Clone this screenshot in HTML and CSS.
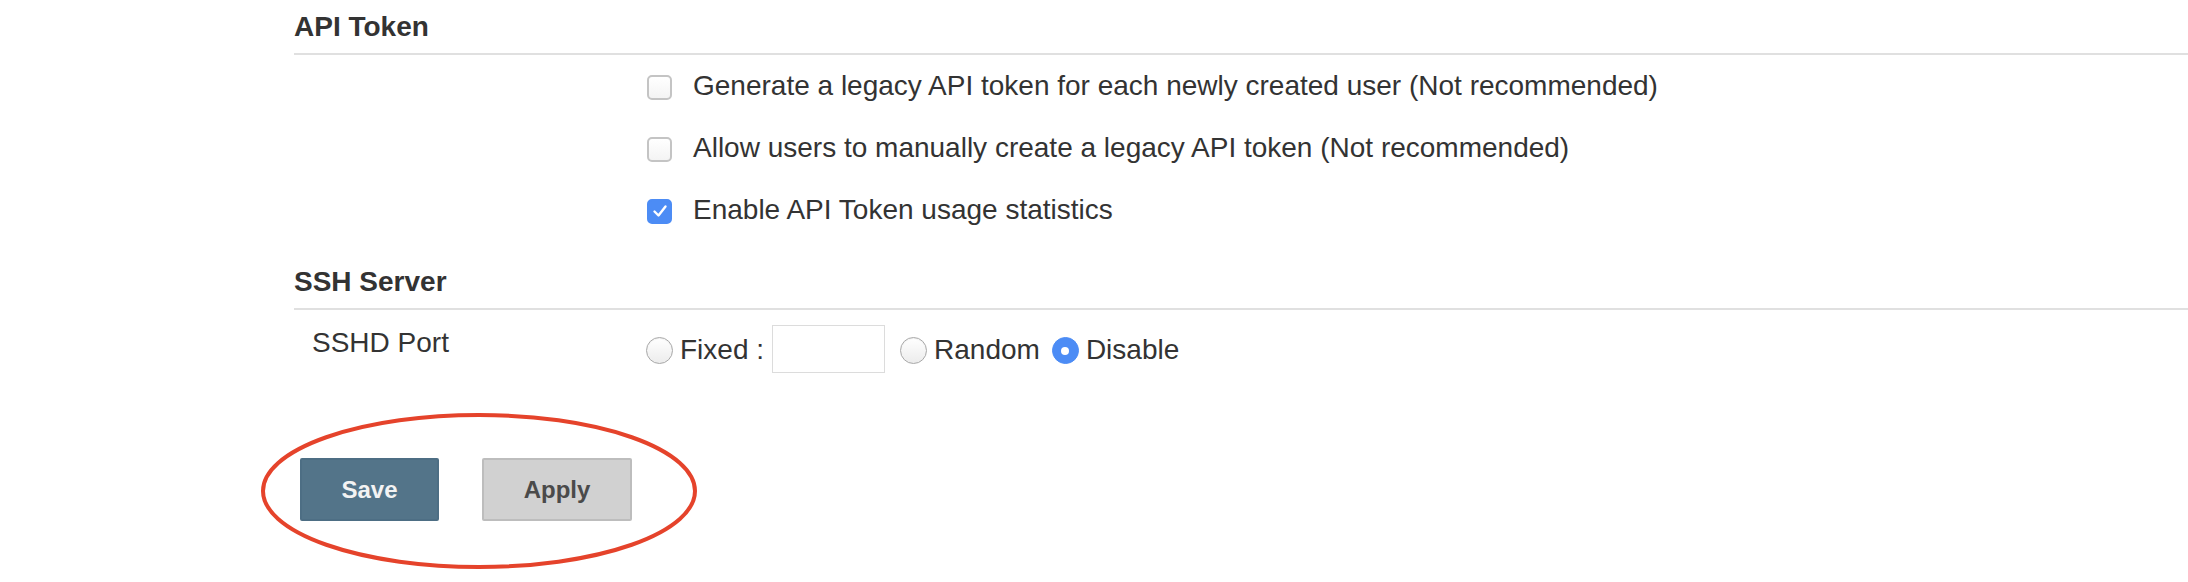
FILE: index.html
```html
<!DOCTYPE html>
<html lang="en">
<head>
<meta charset="utf-8">
<title>Configure Global Security</title>
<link rel="stylesheet" href="styles.css">
</head>
<body>
<div class="page">
  <section class="section">
    <h2 class="section-title">API Token</h2>
    <div class="row">
      <div class="row-label"></div>
      <div class="row-field">
        <label class="check"><span class="box"></span>Generate a legacy API token for each newly created user (Not recommended)</label>
      </div>
    </div>
    <div class="row">
      <div class="row-label"></div>
      <div class="row-field">
        <label class="check"><span class="box"></span>Allow users to manually create a legacy API token (Not recommended)</label>
      </div>
    </div>
    <div class="row">
      <div class="row-label"></div>
      <div class="row-field">
        <label class="check"><span class="box box-on"><svg viewBox="0 0 24 24" width="24" height="24"><polyline points="6.5,12.5 10.5,16.5 17.5,7.5" fill="none" stroke="#fff" stroke-width="2.4" stroke-linecap="round" stroke-linejoin="round"/></svg></span>Enable API Token usage statistics</label>
      </div>
    </div>
  </section>

  <section class="section section-ssh">
    <h2 class="section-title">SSH Server</h2>
    <div class="port-row">
      <div class="row-label port-label">SSHD Port</div>
      <div class="port-field">
        <label class="opt"><span class="radio"></span><span class="opt-text">Fixed :</span></label>
        <span class="port-input"></span>
        <label class="opt opt-random"><span class="radio"></span><span class="opt-text">Random</span></label>
        <label class="opt"><span class="radio radio-on"></span><span class="opt-text">Disable</span></label>
      </div>
    </div>
  </section>

  <div class="buttons">
    <button class="btn btn-primary" type="button">Save</button>
    <button class="btn btn-secondary" type="button">Apply</button>
  </div>

  <svg class="annotation" width="440" height="160" viewBox="0 0 440 160">
    <ellipse cx="220" cy="80" rx="216" ry="76" fill="none" stroke="#e5432b" stroke-width="4"/>
  </svg>
</div>
</body>
</html>
```

FILE: styles.css
```css
html, body {
  margin: 0;
  padding: 0;
  background: #ffffff;
}

body {
  font-family: "Liberation Sans", Arial, Helvetica, sans-serif;
  color: #333333;
}

.page {
  position: relative;
  padding: 11px 0 0 294px;
  height: 571px;
}

.section-title {
  margin: 0;
  font-size: 28px;
  font-weight: bold;
  line-height: 32px;
  color: #333333;
  padding-bottom: 10px;
  border-bottom: 2px solid #e0e0e0;
}

.row {
  display: flex;
  height: 62px;
  padding: 11px 0;
  box-sizing: border-box;
}

.row-label {
  width: 352px;
  flex: none;
  box-sizing: border-box;
}

.row-field {
  display: flex;
  align-items: center;
}

.check {
  display: flex;
  align-items: center;
  font-size: 28px;
  line-height: 40px;
  white-space: nowrap;
}

.box {
  display: inline-block;
  box-sizing: border-box;
  width: 25px;
  height: 25px;
  margin: 3px 21px 0 1px;
  border: 2px solid #c4c4c4;
  border-radius: 5px;
  background: linear-gradient(#ffffff, #f4f4f4);
  flex: none;
}

.box svg {
  display: block;
  margin: -2px 0 0 -1.5px;
}

.box-on {
  background: #4c8cf5;
  border-color: #4c8cf5;
}

.section-ssh {
  margin-top: 25px;
}

.port-row {
  display: flex;
  align-items: flex-start;
  padding-top: 15px;
}

.port-label {
  padding-left: 18px;
  font-size: 28px;
  line-height: 32px;
  padding-top: 2px;
}

.port-field {
  display: flex;
  align-items: center;
  height: 48px;
  font-size: 28px;
  line-height: 32px;
  white-space: nowrap;
}

.opt {
  display: flex;
  align-items: center;
}

.opt-text {
  margin-left: 7px;
  padding-top: 1px;
}

.opt-random {
  margin-right: 12px;
}

.radio {
  display: inline-block;
  box-sizing: border-box;
  width: 27px;
  height: 27px;
  border-radius: 50%;
  border: 1px solid #a8a8a8;
  background: linear-gradient(#ffffff, #ececec);
  box-shadow: inset 0 1px 1px rgba(0, 0, 0, 0.06);
  position: relative;
  flex: none;
  margin-top: 3px;
}

.radio-on {
  background: #4c8cf5;
  border-color: #4c8cf5;
  box-shadow: none;
}

.radio-on::after {
  content: "";
  position: absolute;
  left: 50%;
  top: 50%;
  width: 8px;
  height: 8px;
  margin: -4px 0 0 -4px;
  border-radius: 50%;
  background: #ffffff;
}

.port-input {
  display: inline-block;
  box-sizing: border-box;
  width: 113px;
  height: 48px;
  margin: 0 15px 0 8px;
  border: 1px solid #dcdcdc;
  background: #ffffff;
}

.buttons {
  display: flex;
  gap: 43px;
  margin: 85px 0 0 6px;
}

.btn {
  font-family: "Liberation Sans", Arial, Helvetica, sans-serif;
  font-size: 24px;
  font-weight: bold;
  line-height: 27px;
  padding: 16px 0;
  border-radius: 2px;
  cursor: pointer;
  box-sizing: border-box;
  height: 63px;
}

.btn-primary {
  width: 139px;
  background: #537489;
  border: 2px solid #4d6e84;
  color: #f3f3f3;
}

.btn-secondary {
  width: 150px;
  background: #d1d1d1;
  border: 2px solid #bdbdbd;
  color: #4a4a4a;
}

.annotation {
  position: absolute;
  left: 259px;
  top: 411px;
  overflow: visible;
}
```
